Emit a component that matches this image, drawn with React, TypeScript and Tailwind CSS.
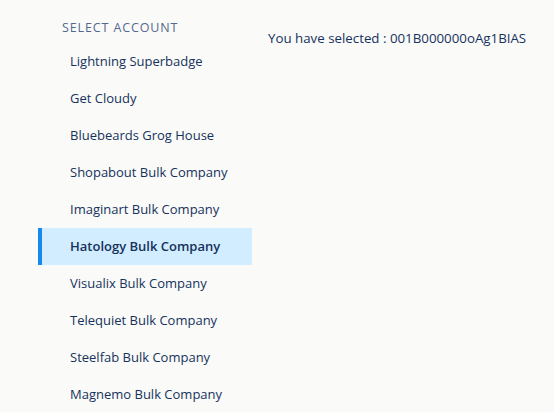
const accounts = [
  'Lightning Superbadge',
  'Get Cloudy',
  'Bluebeards Grog House',
  'Shopabout Bulk Company',
  'Imaginart Bulk Company',
  'Hatology Bulk Company',
  'Visualix Bulk Company',
  'Telequiet Bulk Company',
  'Steelfab Bulk Company',
  'Magnemo Bulk Company',
]

export default function App() {
  const selected = 'Hatology Bulk Company'

  return (
    <div className="h-[412px] w-[554px] overflow-hidden bg-[#fafaf9] font-['Open_Sans',sans-serif] text-[13px] text-[#16325c]">
      <div className="flex">
        <nav className="ml-[38px] w-[214px] pt-[19px]">
          <h2 className="pl-[24px] text-[12.5px] uppercase leading-[18px] tracking-[0.07em] text-[#54698d]">
            Select Account
          </h2>
          <ul className="mt-[6px]">
            {accounts.map((name) => {
              const isActive = name === selected
              return (
                <li
                  key={name}
                  className={
                    isActive
                      ? 'flex h-[37px] items-center border-l-4 border-[#1589ee] bg-[#d1edff] pl-[28px] font-semibold'
                      : 'flex h-[37px] items-center border-l-4 border-transparent pl-[28px]'
                  }
                >
                  {name}
                </li>
              )
            })}
          </ul>
        </nav>
        <div className="ml-[16px] pt-[29px]">
          <p className="text-[13.3px] leading-[18px]">You have selected : 001B000000oAg1BIAS</p>
        </div>
      </div>
    </div>
  )
}
